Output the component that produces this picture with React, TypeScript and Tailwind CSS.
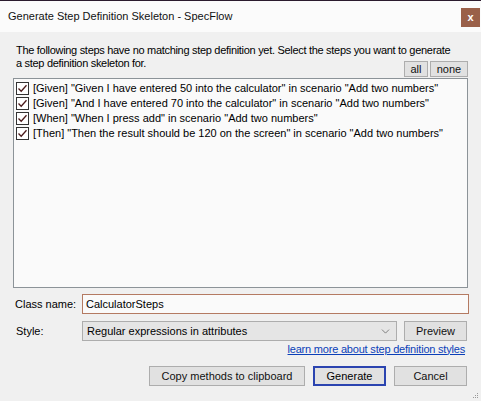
import { ChevronDown } from 'lucide-react'

const steps = [
  '[Given] "Given I have entered 50 into the calculator" in scenario "Add two numbers"',
  '[Given] "And I have entered 70 into the calculator" in scenario "Add two numbers"',
  '[When] "When I press add" in scenario "Add two numbers"',
  '[Then] "Then the result should be 120 on the screen" in scenario "Add two numbers"',
]

function Check() {
  return (
    <span className="w-[13px] h-[13px] border border-[#333333] bg-white flex items-center justify-center shrink-0">
      <svg width="11" height="11" viewBox="0 0 11 11" fill="none">
        <path d="M1.5 5.5 L4.2 8.3 L9.5 2.2" stroke="#4a1a1a" strokeWidth="1.3" />
      </svg>
    </span>
  )
}

const btn = 'bg-[#e1e1e1] border border-[#adadad] flex items-center justify-center text-[#111] whitespace-nowrap'

export default function App() {
  return (
    <div
      className="w-[481px] h-[401px] bg-[#f0f0f0] border-t border-[#2b1b2e] flex flex-col text-[11px] text-black overflow-hidden"
      style={{ fontFamily: '"Liberation Sans", Arial, sans-serif' }}
    >
      <div className="h-[31px] bg-[#fbfbfb] flex items-start justify-between pl-[8px] pr-[1px]">
        <span className="text-[11px] leading-[31px] text-[#111]">Generate Step Definition Skeleton - SpecFlow</span>
        <button type="button" className="mt-[7px] w-[19px] h-[19px] bg-[#9a6049] text-white text-[11px] font-bold leading-none flex items-center justify-center">
          x
        </button>
      </div>

      <div className="flex flex-col px-[13px] pt-[12px]">
        <p className="pl-[3px] leading-[13px] whitespace-nowrap tracking-[-0.3px]">
          The following steps have no matching step definition yet. Select the steps you want to generate
          <br />
          a step definition skeleton for.
        </p>
        <div className="flex justify-end gap-[2px] -mt-[9px] mb-[1px]">
          <button type="button" className={`${btn} w-[24px] h-[16px] leading-none`}>all</button>
          <button type="button" className={`${btn} w-[38px] h-[16px] leading-none`}>none</button>
        </div>

        <div className="h-[210px] border border-[#8c9398] bg-[#fafafa] pt-[2px] pl-[2px]">
          {steps.map(s => (
            <label key={s} className="flex items-center gap-[4px] h-[15px] whitespace-nowrap">
              <Check />
              <span>{s}</span>
            </label>
          ))}
        </div>

        <div className="flex items-center mt-[6px] h-[20px]">
          <span className="w-[69px] pl-[2px] whitespace-nowrap">Class name:</span>
          <div className="flex-1 h-[20px] border border-[#b47a62] bg-[#fafafa] flex items-center pl-[3px] mr-[-1px]">
            CalculatorSteps
          </div>
        </div>

        <div className="flex items-center mt-[7px] h-[20px]">
          <span className="w-[69px] pl-[3px]">Style:</span>
          <div className="w-[315px] h-[20px] bg-[#e5e5e5] border border-[#adadad] flex items-center justify-between pl-[4px] pr-[4px]">
            <span>Regular expressions in attributes</span>
            <ChevronDown size={13} strokeWidth={1.3} className="text-[#555]" />
          </div>
          <button type="button" className={`${btn} ml-[7px] w-[63px] h-[20px]`}>Preview</button>
        </div>

        <div className="flex justify-end pr-[3px] mt-[1px] h-[14px] items-center">
          <a href="#" className="text-[#0b3fb8] underline leading-none whitespace-nowrap tracking-[-0.2px]">learn more about step definition styles</a>
        </div>

        <div className="flex justify-end gap-[8px] mt-[10px] pr-[1px]">
          <button type="button" className={`${btn} w-[156px] h-[20px]`}>Copy methods to clipboard</button>
          <button type="button" className="w-[73px] h-[20px] bg-[#e1e1e1] border-2 border-[#2b44b0] flex items-center justify-center">Generate</button>
          <button type="button" className={`${btn} w-[73px] h-[20px]`}>Cancel</button>
        </div>
      </div>

      <div className="flex-1 flex items-end justify-end pr-[2px] pb-[2px]">
        <svg width="6" height="6" viewBox="0 0 6 6">
          <rect x="4" y="0" width="1" height="1" fill="#999" />
          <rect x="2" y="2" width="1" height="1" fill="#999" />
          <rect x="4" y="2" width="1" height="1" fill="#999" />
          <rect x="0" y="4" width="1" height="1" fill="#999" />
          <rect x="2" y="4" width="1" height="1" fill="#999" />
          <rect x="4" y="4" width="1" height="1" fill="#999" />
        </svg>
      </div>
    </div>
  )
}
